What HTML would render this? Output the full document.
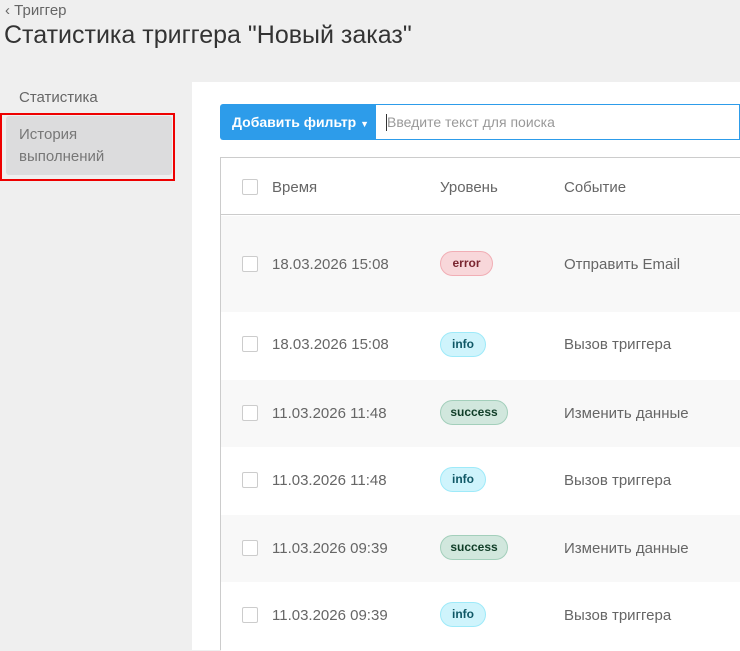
<!DOCTYPE html>
<html><head><meta charset="utf-8"><style>
*{box-sizing:border-box;margin:0;padding:0}
body{width:740px;height:650px;overflow:hidden;background:#efefef;font-family:"Liberation Sans","DejaVu Sans",sans-serif;color:#555;position:relative}
.a{position:absolute}
.back{left:5px;top:2px;font-size:15px;color:#666}
.title{left:4px;top:21px;font-size:25px;color:#333}
.side1{left:19px;top:89px;font-size:15px;color:#666}
.hl{left:6px;top:116px;width:166px;height:59px;background:#dcdcdd;border-radius:3px}
.red{left:0;top:113px;width:175px;height:68px;border:2px solid #e00}
.hltext{left:19px;top:124px;font-size:15px;line-height:22px;color:#777}
.panel{left:192px;top:82px;width:548px;height:568px;background:#fff}
.btn{left:220px;top:104px;width:156px;height:36px;background:#2d9cea;border-radius:3px 0 0 3px;color:#fff;font-weight:bold;font-size:14px;line-height:36px;padding-left:12px}
.inp{left:375px;top:104px;width:365px;height:36px;border:1px solid #2d9cea;border-left:none;font-size:14px;color:#999;line-height:34px;padding-left:12px}
.inp:before{content:"";position:absolute;left:11px;top:9px;width:1px;height:17px;background:#333}
.tbl{left:220px;top:157px;width:520px;height:493px;border:1px solid #ccc;border-right:none;border-bottom:none}
.row{position:absolute;left:0;width:520px;font-size:15px;color:#666}
.cb{position:absolute;left:21px;width:16px;height:16px;border:1px solid #ccc;border-radius:2px;background:#fff}
.c1{position:absolute;left:51px;margin-top:2px}
.c2{position:absolute;left:219px;margin-top:2px}
.c3{position:absolute;left:343px;margin-top:2px}
.badge{position:absolute;left:219px;height:25px;border-radius:13px;font-size:12px;font-weight:bold;line-height:23px;text-align:center;border:1px solid}
.err{width:53px;background:#f8d7da;border-color:#f1aeb5;color:#7a2630}
.inf{width:46px;background:#cff4fc;border-color:#9eeaf9;color:#105866}
.suc{width:68px;background:#d1e7dd;border-color:#a3cfbb;color:#0f3d27}
</style></head><body>
<div class="a back">&lsaquo; Триггер</div>
<div class="a title">Статистика триггера "Новый заказ"</div>
<div class="a side1">Статистика</div>
<div class="a hl"></div>
<div class="a hltext">История<br>выполнений</div>
<div class="a red"></div>
<div class="a panel"></div>
<div class="a btn">Добавить фильтр <span style="font-size:9px">▼</span></div>
<div class="a inp">Введите текст для поиска</div>
<div class="a tbl">
<div class="row" style="top:0;height:57px;border-bottom:1px solid #ccc"><div class="cb" style="top:21px"></div><div class="c1" style="top:19px">Время</div><div class="c2" style="top:19px">Уровень</div><div class="c3" style="top:19px">Событие</div></div>
<div class="row" style="top:58px;height:96px;background:#f8f8f8"><div class="cb" style="top:40px"></div><div class="c1" style="top:38px">18.03.2026 15:08</div><div class="badge err" style="top:35px">error</div><div class="c3" style="top:38px">Отправить Email</div></div>
<div class="row" style="top:154px;height:68px;background:#fff"><div class="cb" style="top:24px"></div><div class="c1" style="top:22px">18.03.2026 15:08</div><div class="badge inf" style="top:20px">info</div><div class="c3" style="top:22px">Вызов триггера</div></div>
<div class="row" style="top:222px;height:67px;background:#f8f8f8"><div class="cb" style="top:25px"></div><div class="c1" style="top:23px">11.03.2026 11:48</div><div class="badge suc" style="top:20px">success</div><div class="c3" style="top:23px">Изменить данные</div></div>
<div class="row" style="top:289px;height:68px;background:#fff"><div class="cb" style="top:25px"></div><div class="c1" style="top:23px">11.03.2026 11:48</div><div class="badge inf" style="top:20px">info</div><div class="c3" style="top:23px">Вызов триггера</div></div>
<div class="row" style="top:357px;height:67px;background:#f8f8f8"><div class="cb" style="top:25px"></div><div class="c1" style="top:23px">11.03.2026 09:39</div><div class="badge suc" style="top:20px">success</div><div class="c3" style="top:23px">Изменить данные</div></div>
<div class="row" style="top:424px;height:69px;background:#fff"><div class="cb" style="top:25px"></div><div class="c1" style="top:23px">11.03.2026 09:39</div><div class="badge inf" style="top:20px">info</div><div class="c3" style="top:23px">Вызов триггера</div></div>
</div>
</body></html>
